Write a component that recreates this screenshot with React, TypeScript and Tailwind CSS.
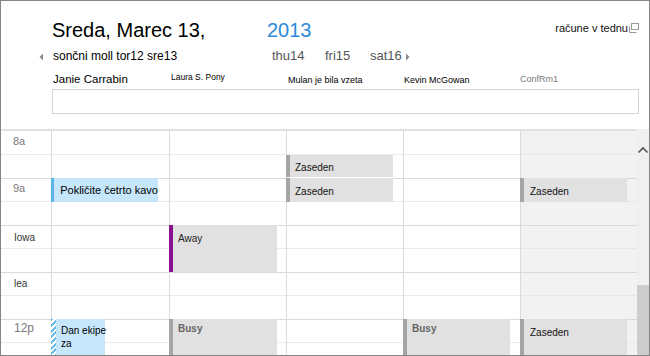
import React from "react";

function Slot({ label, labelCls }: { label?: string; labelCls?: string }) {
  return (
    <div className="flex flex-col shrink-0">
      <div className="h-[23px] border-b border-[#ebeded]">
        {label ? <div className={labelCls}>{label}</div> : null}
      </div>
      <div className="h-[24px] border-b border-[#d8dcdc]" />
    </div>
  );
}

function GraySlot() {
  return (
    <div className="flex flex-col shrink-0">
      <div className="h-[23px] border-b border-[#e6e8e8]" />
      <div className="h-[24px] border-b border-[#d6dada]" />
    </div>
  );
}

function Slots() {
  return (
    <>
      <Slot />
      <Slot />
      <Slot />
      <Slot />
      <Slot />
    </>
  );
}

export default function App() {
  return (
    <div className="w-[650px] h-[356px] border border-[#858585] bg-white flex flex-col overflow-hidden text-black font-['Liberation_Sans',Arial,sans-serif]">
      {/* Header */}
      <div className="h-[128px] shrink-0 flex flex-col">
        <div className="flex items-start pt-[17px] h-[45px] shrink-0">
          <div className="ml-[51px] w-[215px] text-[20px] leading-[24px]">Sreda, Marec 13,</div>
          <div className="text-[20px] leading-[24px] text-[#2c89d9]">2013</div>
          <div className="ml-auto mr-[10px] mt-[3px] flex items-start text-[11px] leading-[14px] text-[#111]">
            <span>račune v tednu</span>
            <svg width="10" height="10" viewBox="0 0 10 10" className="mt-[2px] ml-[1px]">
              <rect x="2.5" y="0.5" width="7" height="6" fill="none" stroke="#9a9a9a" strokeWidth="1" />
              <path d="M0.5 3.5 V9.5 H7.5" fill="none" stroke="#9a9a9a" strokeWidth="1" />
            </svg>
          </div>
        </div>
        <div className="flex items-start h-[20px] shrink-0">
          <svg width="5" height="8" viewBox="0 0 5 8" className="ml-[38px] mt-[7px]">
            <path d="M4 0.5 L0.5 4 L4 7.5 Z" fill="#8a8a8a" />
          </svg>
          <div className="ml-[9px] w-[219px] text-[12px] leading-[16px] mt-[2px]">sončni moll tor12 sre13</div>
          <div className="w-[53px] mt-[2px] text-[13px] leading-[16px] text-[#555]">thu14</div>
          <div className="w-[45px] mt-[2px] text-[13px] leading-[16px] text-[#555]">fri15</div>
          <div className="w-[35px] mt-[2px] text-[13px] leading-[16px] text-[#555]">sat16</div>
          <svg width="5" height="8" viewBox="0 0 5 8" className="mt-[7px]">
            <path d="M1 0.5 L4.5 4 L1 7.5 Z" fill="#8a8a8a" />
          </svg>
        </div>
        <div className="flex items-start h-[16px] mt-[5px] pl-[51px] shrink-0">
          <div className="w-[118px] pl-[1px] mt-[1px] text-[11.5px] leading-[14px]">Janie Carrabin</div>
          <div className="w-[117px] pl-[1px] text-[8.5px] leading-[12px]">Laura S. Pony</div>
          <div className="w-[117px] pl-[1px] mt-[3px] text-[9px] leading-[12px]">Mulan je bila vzeta</div>
          <div className="w-[116px] mt-[3px] text-[9px] leading-[12px]">Kevin McGowan</div>
          <div className="w-[117px] mt-[2px] text-[9px] leading-[12px] text-[#7a7a7a]">ConfRm1</div>
        </div>
        <div className="ml-[51px] mt-[2px] w-[587px] h-[25px] shrink-0 border border-[#d3d5d5] bg-white" />
      </div>

      {/* Body */}
      <div className="flex flex-1 min-h-0">
        <div className="w-[636px] flex flex-col">
          <div className="h-[2px] shrink-0 bg-[#dfe2e2]" />
          <div className="flex flex-1 min-h-0 overflow-hidden">
            {/* time column */}
            <div className="w-[50px] flex flex-col pt-[1px]">
              <Slot label="8a" labelCls="pl-[12px] pt-[3px] text-[11px] leading-[13px] text-[#7a7a7a]" />
              <Slot label="9a" labelCls="pl-[12px] pt-[3px] text-[11px] leading-[13px] text-[#7a7a7a]" />
              <Slot label="Iowa" labelCls="pl-[13px] pt-[6px] text-[10px] leading-[12px] text-[#333]" />
              <Slot label="lea" labelCls="pl-[13px] pt-[5px] text-[10px] leading-[12px] text-[#333]" />
              <Slot label="12p" labelCls="pl-[13px] pt-[1px] text-[12px] leading-[14px] text-[#7a7a7a]" />
            </div>

            {/* Janie */}
            <div className="relative w-[118px] border-l border-[#d8dcdc] flex flex-col pt-[1px]">
              <Slots />
              <div className="absolute left-[-1px] top-[47px] h-[24px] w-[107px] flex bg-[#c6e7fb]">
                <div className="w-[4px] bg-[#5cb5ea]" />
                <div className="pl-[6px] pt-[5px] text-[11px] leading-[14px] whitespace-nowrap">Pokličite četrto kavo</div>
              </div>
              <div className="absolute left-[-1px] top-[188px] h-[60px] w-[54px] flex bg-[#c6e7fb]">
                <div className="w-[5px] shrink-0 bg-[image:repeating-linear-gradient(135deg,#6dbce9_0px,#6dbce9_2px,#ffffff_2px,#ffffff_4px)]" />
                <div className="pl-[5px] pt-[5px] text-[10px] leading-[13px] whitespace-nowrap">
                  Dan ekipe
                  <br />
                  za
                </div>
              </div>
            </div>

            {/* Laura */}
            <div className="relative w-[117px] border-l border-[#d8dcdc] flex flex-col pt-[1px]">
              <Slots />
              <div className="absolute left-[-1px] top-[94px] h-[47px] w-[108px] flex bg-[#e1e1e1]">
                <div className="w-[4px] bg-[#88128f]" />
                <div className="pl-[5px] pt-[7px] text-[10px] leading-[13px] text-[#222]">Away</div>
              </div>
              <div className="absolute left-[-1px] top-[188px] h-[60px] w-[108px] flex bg-[#e1e1e1]">
                <div className="w-[4px] bg-[#a5a5a5]" />
                <div className="pl-[5px] pt-[3px] text-[10px] leading-[13px] font-bold text-[#666]">Busy</div>
              </div>
            </div>

            {/* Mulan */}
            <div className="relative w-[117px] border-l border-[#d8dcdc] flex flex-col pt-[1px]">
              <Slots />
              <div className="absolute left-[-1px] top-[24px] h-[22px] w-[107px] flex bg-[#e1e1e1]">
                <div className="w-[4px] bg-[#a5a5a5]" />
                <div className="pl-[5px] pt-[6px] text-[10px] leading-[13px] text-[#111]">Zaseden</div>
              </div>
              <div className="absolute left-[-1px] top-[47px] h-[24px] w-[107px] flex bg-[#e1e1e1]">
                <div className="w-[4px] bg-[#a5a5a5]" />
                <div className="pl-[5px] pt-[7px] text-[10px] leading-[13px] text-[#111]">Zaseden</div>
              </div>
            </div>

            {/* Kevin */}
            <div className="relative w-[117px] border-l border-[#d8dcdc] flex flex-col pt-[1px]">
              <Slots />
              <div className="absolute left-[-1px] top-[188px] h-[60px] w-[107px] flex bg-[#e1e1e1]">
                <div className="w-[4px] bg-[#a5a5a5]" />
                <div className="pl-[5px] pt-[3px] text-[10px] leading-[13px] font-bold text-[#666]">Busy</div>
              </div>
            </div>

            {/* ConfRm1 */}
            <div className="relative w-[117px] border-l border-[#d8dcdc] bg-[#f2f2f2] flex flex-col pt-[1px]">
              <GraySlot />
              <GraySlot />
              <GraySlot />
              <GraySlot />
              <GraySlot />
              <div className="absolute left-[-1px] top-[47px] h-[24px] w-[107px] flex bg-[#e1e1e1]">
                <div className="w-[4px] bg-[#a5a5a5]" />
                <div className="pl-[6px] pt-[7px] text-[10px] leading-[13px] text-[#111]">Zaseden</div>
              </div>
              <div className="absolute left-[-1px] top-[188px] h-[60px] w-[107px] flex bg-[#e1e1e1]">
                <div className="w-[4px] bg-[#a5a5a5]" />
                <div className="pl-[6px] pt-[7px] text-[10px] leading-[13px] text-[#111]">Zaseden</div>
              </div>
            </div>
          </div>
        </div>

        {/* Scrollbar */}
        <div className="w-[12px] flex flex-col bg-[#f0f0f0]">
          <div className="h-[17px] shrink-0" />
          <svg width="12" height="8" viewBox="0 0 12 8" className="shrink-0">
            <path d="M1.5 6.5 L6 2 L10.5 6.5" fill="none" stroke="#555" strokeWidth="1.6" />
          </svg>
          <div className="flex-1" />
          <div className="h-[70px] shrink-0 bg-[#cdcdcd]" />
        </div>
      </div>
    </div>
  );
}
